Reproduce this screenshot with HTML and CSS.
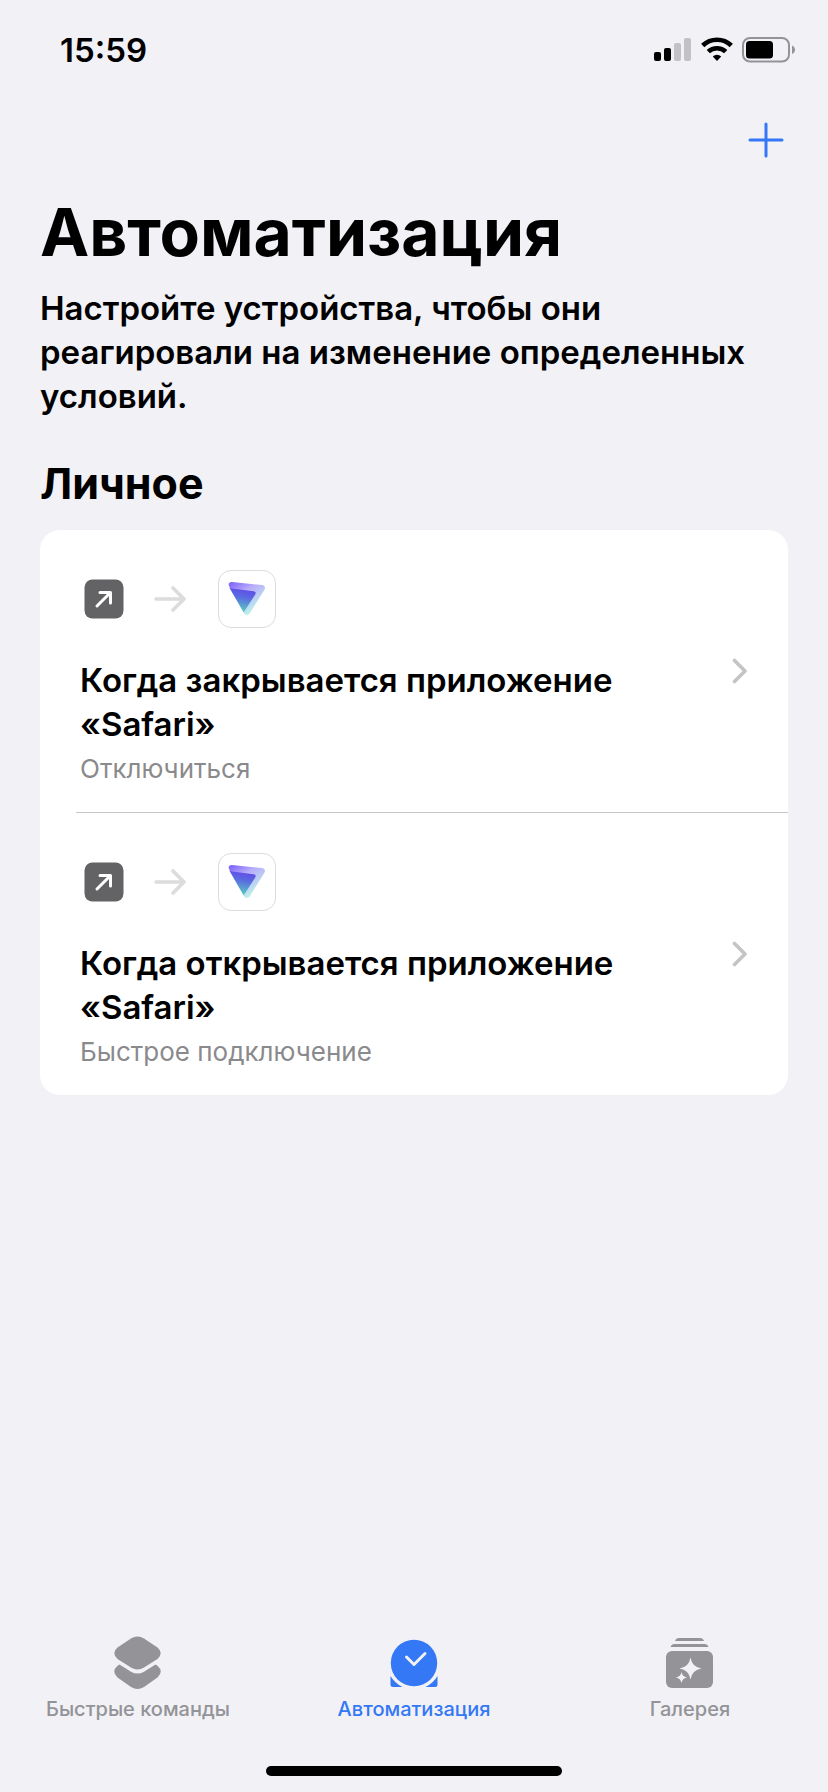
FILE: index.html
```
<!DOCTYPE html>
<html lang="ru">
<head>
    <meta charset="UTF-8">
    <meta name="viewport" content="width=device-width, initial-scale=1.0">
    <title>Автоматизация</title>
    <link rel="stylesheet" href="styles.css">
</head>
<body>
    <!-- Shared icons -->
    <svg class="sprite" aria-hidden="true">
        <defs>
            <linearGradient id="vpn-back" x1="0" y1="0" x2="0.7" y2="1">
                <stop offset="0" stop-color="#7a5cfa"/>
                <stop offset="0.4" stop-color="#b9aefb"/>
                <stop offset="1" stop-color="#bdfbe9"/>
            </linearGradient>
            <linearGradient id="vpn-front" x1="0.6" y1="0" x2="0.4" y2="1">
                <stop offset="0" stop-color="#6148ea"/>
                <stop offset="0.4" stop-color="#5a6ce0"/>
                <stop offset="1" stop-color="#56d5bd"/>
            </linearGradient>
        </defs>
        <symbol id="open-app" viewBox="0 0 40 40">
            <rect x="0.5" y="0.5" width="39" height="39" rx="8" fill="#636365"/>
            <path d="M13 27 L26.5 13.5 M16 13.5 H26.5 V24" fill="none" stroke="#fff" stroke-width="3" stroke-linecap="round" stroke-linejoin="round"/>
        </symbol>
        <symbol id="arrow" viewBox="0 0 32 28">
            <path d="M2 14 H29 M19 3 L30 14 L19 25" fill="none" stroke="#dcdcdd" stroke-width="3.6" stroke-linecap="round" stroke-linejoin="round"/>
        </symbol>
        <symbol id="vpn" viewBox="0 0 38 36">
            <path d="M1 5 C0 2.500 1.500 0.800 4 1 L34 4 C36.800 4.300 37.800 6.500 36.300 9 L22 32 C20.500 34.500 17.500 34.500 16 32 Z" fill="url(#vpn-back)"/>
            <path d="M1.300 6.500 C2 7 2.500 7.300 4 7.500 L25.500 10.200 C27.500 10.500 28.200 11.700 27.200 13.400 L16.200 30.500 C15.800 31.200 15.700 31.500 15.700 31.500 Z" fill="url(#vpn-front)"/>
        </symbol>
        <symbol id="chevron" viewBox="0 0 16 26">
            <path d="M2.500 2.500 L13 13 L2.500 23.500" fill="none" stroke="#c4c4c6" stroke-width="3.600" stroke-linecap="round" stroke-linejoin="round"/>
        </symbol>
    </svg>

    <header class="status-bar">
        <span class="time">15:59</span>
        <div class="status-icons">
            <svg width="38" height="26" viewBox="0 0 38 26">
                <rect x="0" y="15" width="7" height="9" rx="2"/>
                <rect x="10" y="11" width="7" height="13" rx="2"/>
                <rect x="20" y="6" width="7" height="18" rx="2" fill="#c2c1c6"/>
                <rect x="30" y="1" width="7" height="23" rx="2" fill="#c2c1c6"/>
            </svg>
            <svg width="32" height="26" viewBox="0 0 32 26" fill="none" stroke="#000" stroke-width="4.600">
                <path d="M1.700 8.500 A20.500 20.500 0 0 1 30.300 8.500"/>
                <path d="M7.300 14.700 A12.500 12.500 0 0 1 24.700 14.700"/>
                <path d="M16 24 L11.800 19.500 A6.200 6.200 0 0 1 20.200 19.500 Z" fill="#000" stroke="none"/>
            </svg>
            <svg width="54" height="26" viewBox="0 0 54 26">
                <rect x="1" y="1" width="46" height="23.500" rx="7" fill="none" stroke="#949397" stroke-width="2"/>
                <rect x="4" y="4" width="27" height="17.500" rx="3.500"/>
                <path d="M50 8.500 C54 10 54 15.500 50 17 Z" fill="#949397"/>
            </svg>
        </div>
    </header>

    <div class="toolbar">
        <button class="add" type="button" aria-label="Добавить">
            <svg width="36" height="36" viewBox="0 0 36 36">
                <path d="M18 2 V34 M2 18 H34" stroke="#3478f6" stroke-width="3" stroke-linecap="round"/>
            </svg>
        </button>
    </div>

    <main class="content">
        <h1>Автоматизация</h1>
        <p class="intro">Настройте устройства, чтобы они реагировали на изменение определенных условий.</p>

        <h2>Личное</h2>
        <ul class="card">
            <li>
                <a class="item" href="#">
                    <div class="item-body">
                        <div class="flow">
                            <svg class="flow-trigger"><use href="#open-app"/></svg>
                            <svg class="flow-arrow"><use href="#arrow"/></svg>
                            <span class="app"><svg width="38" height="36"><use href="#vpn"/></svg></span>
                        </div>
                        <h3>Когда закрывается приложение «Safari»</h3>
                        <p class="action">Отключиться</p>
                    </div>
                    <svg class="chevron"><use href="#chevron"/></svg>
                </a>
            </li>
            <li>
                <a class="item" href="#">
                    <div class="item-body">
                        <div class="flow">
                            <svg class="flow-trigger"><use href="#open-app"/></svg>
                            <svg class="flow-arrow"><use href="#arrow"/></svg>
                            <span class="app"><svg width="38" height="36"><use href="#vpn"/></svg></span>
                        </div>
                        <h3>Когда открывается приложение «Safari»</h3>
                        <p class="action">Быстрое подключение</p>
                    </div>
                    <svg class="chevron"><use href="#chevron"/></svg>
                </a>
            </li>
        </ul>
    </main>

    <nav class="tabs">
        <a class="tab" href="#">
            <svg width="56" height="56" viewBox="0 0 56 56" fill="currentColor">
                <path d="M21 4.500 Q27.500 0.500 34 4.500 L47.500 13.500 Q54 19 47.500 25 L34 33.500 Q27.500 37.500 21 33.500 L7.500 25 Q1 19 7.500 13.500 Z"/>
                <path d="M9.500 30.500 L21 37.700 Q27.500 41.500 34 37.700 L45.500 30.500 L47.500 31.800 Q54 37.500 47.500 43.500 L34 53 Q27.500 57 21 53 L7.500 43.500 Q1 37.500 7.500 31.800 Z"/>
            </svg>
            <span>Быстрые команды</span>
        </a>
        <a class="tab active" href="#">
            <svg width="56" height="56" viewBox="0 0 56 56" fill="currentColor">
                <circle cx="28" cy="29" r="23.200"/>
                <path d="M4.500 42 Q8.500 49 16.500 53 H7 Q4.500 53 4.500 50.500 Z"/>
                <path d="M51.500 42 Q47.500 49 39.500 53 H49 Q51.500 53 51.500 50.500 Z"/>
                <path d="M20.500 23 L28 30.500 L39 19.500" fill="none" stroke="#f1f1f6" stroke-width="3" stroke-linecap="round" stroke-linejoin="round"/>
            </svg>
            <span>Автоматизация</span>
        </a>
        <a class="tab" href="#">
            <svg width="56" height="56" viewBox="0 0 56 56" fill="currentColor">
                <path d="M13 7 Q14 4 17 4 H38 Q41 4 42 7 Z"/>
                <path d="M8.500 13 Q9.500 10 12.500 10 H42.500 Q45.500 10 46.500 13 Z"/>
                <rect x="4" y="17" width="47" height="37" rx="6"/>
                <path d="M28.500 23.500 Q30 33 39.500 34.500 Q30 36 28.500 45.500 Q27 36 17.500 34.500 Q27 33 28.500 23.500 Z" fill="#f1f1f6"/>
                <path d="M19.500 38 Q20.300 42.700 25 43.500 Q20.300 44.300 19.500 49 Q18.700 44.300 14 43.500 Q18.700 42.700 19.500 38 Z" fill="#f1f1f6"/>
            </svg>
            <span>Галерея</span>
        </a>
    </nav>
    <div class="home-indicator"></div>
</body>
</html>
```

FILE: styles.css
```
* {
    box-sizing: border-box;
    margin: 0;
    padding: 0;
}
body {
    min-height: 100vh;
    display: flex;
    flex-direction: column;
    background: #f1f1f6;
    color: #000;
    font-family: Inter, "Liberation Sans", sans-serif;
}
svg {
    display: block;
    flex: none;
}
a {
    color: inherit;
    text-decoration: none;
}
.sprite {
    position: absolute;
    width: 0;
    height: 0;
}

/* Status bar */
.status-bar {
    display: flex;
    align-items: center;
    justify-content: space-between;
    height: 88px;
    padding: 12px 32px 0 60px;
}
.time {
    font-size: 33px;
    line-height: 40px;
    font-weight: 600;
}
.status-icons {
    display: flex;
    gap: 9px;
}

.toolbar {
    display: flex;
    align-items: center;
    justify-content: flex-end;
    height: 104px;
    padding: 0 44px;
}
.add {
    border: none;
    background: none;
    cursor: pointer;
}

/* Content */
.content {
    flex: 1;
    padding: 0 40px;
}
h1 {
    font-size: 66px;
    line-height: 80px;
    font-weight: 700;
}
.intro {
    margin-top: 14px;
    font-size: 33px;
    line-height: 44px;
    font-weight: 600;
}
h2 {
    margin: 39px 0 21px;
    font-size: 43px;
    line-height: 52px;
    font-weight: 700;
}
.card {
    padding-left: 36px;
    background: #fff;
    border-radius: 20px;
    list-style: none;
}
.card li + li {
    border-top: 1px solid #c6c6c8;
}
.item {
    display: flex;
    align-items: center;
    gap: 40px;
    padding: 0 40px 0 4px;
}
.item-body {
    flex: 1;
    padding: 40px 0 27px;
}
.flow {
    display: flex;
    align-items: center;
    padding-left: 4px;
    margin-bottom: 30px;
}
.flow-trigger {
    width: 40px;
    height: 40px;
}
.flow-arrow {
    width: 32px;
    height: 28px;
    margin: 0 32px 0 30px;
}
.app {
    display: flex;
    align-items: center;
    justify-content: center;
    width: 58px;
    height: 58px;
    border: 1px solid #dcdcdf;
    border-radius: 13px;
}
h3 {
    font-size: 33px;
    line-height: 44px;
    font-weight: 600;
}
.action {
    margin-top: 7px;
    color: #8a8a8d;
    font-size: 26px;
    line-height: 32px;
}
.chevron {
    width: 16px;
    height: 26px;
}

/* Tab bar */
.tabs {
    display: grid;
    grid-template-columns: repeat(3, 1fr);
}
.tab {
    display: flex;
    flex-direction: column;
    align-items: center;
    gap: 5px;
    color: #939398;
    font-size: 20px;
    line-height: 28px;
    font-weight: 500;
}
.tab.active {
    color: #3478f6;
}
.home-indicator {
    width: 296px;
    height: 10px;
    margin: 43px auto 16px;
    background: #000;
    border-radius: 5px;
}
```
